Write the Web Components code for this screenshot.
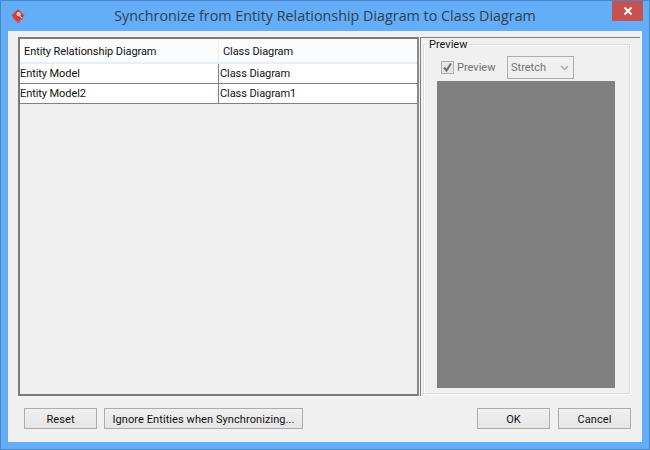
<!DOCTYPE html>
<html lang="en">
<head>
<meta charset="UTF-8">
<title>Synchronize</title>
<style>
html, body { margin: 0; padding: 0; background: #63adf9; }
body { width: 650px; height: 450px; overflow: hidden; font: 11px Roboto, sans-serif; }
</style>
</head>
<body>
<sync-dialog title-text="Synchronize from Entity Relationship Diagram to Class Diagram">
    <diagram-table slot="main">
        <table-row kind="head" a="Entity Relationship Diagram" b="Class Diagram"></table-row>
        <table-row a="Entity Model" b="Class Diagram"></table-row>
        <table-row a="Entity Model2" b="Class Diagram1"></table-row>
    </diagram-table>
    <preview-panel slot="side"></preview-panel>
    <win-button slot="left" style="width:73px">Reset</win-button>
    <win-button slot="left" style="width:199px">Ignore Entities when Synchronizing...</win-button>
    <win-button slot="right" style="width:73px">OK</win-button>
    <win-button slot="right" style="width:73px">Cancel</win-button>
</sync-dialog>

<script>
class SyncDialog extends HTMLElement {
    constructor() {
        super();
        this.attachShadow({ mode: 'open' });
        this.shadowRoot.innerHTML = `
        <style>
            :host { display: flex; flex-direction: column; box-sizing: border-box; width: 650px; height: 450px;
                background: #63adf9; border: 1px solid #4a86c4; padding: 0 7px 7px; }
            .title { display: flex; align-items: center; height: 30px; position: relative; flex: none; }
            .title svg.logo { margin-left: 2px; flex: none; }
            .title span { flex: 1; text-align: center; font: 14.33px "Open Sans", sans-serif; color: #2f3f50; padding-right: 19px; margin-top: -2px; white-space: nowrap; }
            .close { position: absolute; top: 0; right: -1px; width: 31px; height: 20px; background: #c75050; display: flex; align-items: center; justify-content: center; }
            .body { flex: 1; min-height: 0; display: flex; flex-direction: column; background: #f0f0f0; padding: 6px 2px 13px 10px; }
            .split { flex: 1; min-height: 0; display: flex; gap: 1px; margin-bottom: 12px; }
            .buttons { display: flex; justify-content: space-between; padding: 0 9px 0 6px; flex: none; }
            .group { display: flex; gap: 7px; }
            .group.r { gap: 8px; }
        </style>
        <div class="title">
            <svg class="logo" width="17" height="17" viewBox="0 0 17 17">
                <path d="M8 1 L14.5 7.5 L8 14 L1.5 7.5 Z" fill="#c9403f"/>
                <path d="M2.5 10 L8 15.5 L13.5 10 L12.5 9.5 L8 14 L3.5 9.5 Z" fill="#d4524e"/>
                <circle cx="8.6" cy="6.2" r="2.1" fill="#f0c4c8"/>
                <path d="M9 7.5 L12 10" stroke="#f0c4c8" stroke-width="1"/>
            </svg>
            <span>${this.getAttribute('title-text')}</span>
            <div class="close">
                <svg width="10" height="10" viewBox="0 0 10 10"><path d="M1.5 1.5 L8.5 8.5 M8.5 1.5 L1.5 8.5" stroke="#fff" stroke-width="2"/></svg>
            </div>
        </div>
        <div class="body">
            <div class="split">
                <slot name="main"></slot>
                <slot name="side"></slot>
            </div>
            <div class="buttons">
                <div class="group"><slot name="left"></slot></div>
                <div class="group r"><slot name="right"></slot></div>
            </div>
        </div>`;
    }
}

class DiagramTable extends HTMLElement {
    constructor() {
        super();
        this.attachShadow({ mode: 'open' });
        this.shadowRoot.innerHTML = `
        <style>
            :host { display: block; flex: none; box-sizing: border-box; width: 401px; height: 100%; background: #f0f0f0;
                border: 2px solid #7a7a7a; border-right-color: #8a8a8a; }
        </style>
        <slot></slot>`;
    }
}

class TableRow extends HTMLElement {
    constructor() {
        super();
        this.attachShadow({ mode: 'open' });
        this.shadowRoot.innerHTML = `
        <style>
            :host { display: grid; grid-template-columns: 198px 199px; height: 19px; background: #fff; color: #111;
                border-bottom: 1px solid #808080; font: 11px Roboto, sans-serif; letter-spacing: -0.08px; }
            :host([kind=head]) { height: 23px; border-bottom: 2px solid #e8eef8; background: #fbfcfe; }
            div { display: flex; align-items: center; white-space: nowrap; overflow: hidden; padding-bottom: 1px; }
            div + div { border-left: 1px solid #808080; padding-left: 1px; }
            :host([kind=head]) div { padding: 1px 0 0 4px; }
            :host([kind=head]) div + div { border-left: 1px solid #eef1f7; padding-left: 4px; }
        </style>
        <div>${this.getAttribute('a')}</div><div>${this.getAttribute('b')}</div>`;
    }
}

class PreviewPanel extends HTMLElement {
    constructor() {
        super();
        this.attachShadow({ mode: 'open' });
        this.shadowRoot.innerHTML = `
        <style>
            :host { display: block; flex: none; box-sizing: border-box; width: 220px; height: 100%; padding: 1px 10px 2px 2px;
                border-top: 1px solid #808080; border-left: 1px solid #808080; font: 11px Roboto, sans-serif; }
            fieldset { box-sizing: border-box; height: 100%; margin: 0; padding: 6px 14px 5px 13px; border: 1px solid #dcdcdc;
                box-shadow: 1px 1px 0 #fff, inset 1px 1px 0 #fff; display: flex; flex-direction: column; min-width: 0; }
            legend { padding: 0 2px; margin-left: -10px; color: #111; line-height: 11px; }
            .opts { display: flex; align-items: center; height: 23px; margin-left: 4px; gap: 3px; flex: none; margin-bottom: 2px; color: #707070; }
            .check { box-sizing: border-box; width: 13px; height: 13px; border: 1px solid #adadad; background: #e6e6e6; display: flex; }
            .label { width: 47px; }
            .sel { box-sizing: border-box; width: 67px; height: 23px; border: 1px solid #adadad; display: flex; align-items: center; justify-content: space-between; padding: 0 4px 0 3px; }
            .canvas { flex: 1; background: #808080; }
        </style>
        <fieldset>
            <legend>Preview</legend>
            <div class="opts">
                <span class="check"><svg width="11" height="11" viewBox="0 0 11 11"><path d="M2 5.5 L4.5 8.5 L9 1.5" fill="none" stroke="#6f6f6f" stroke-width="2"/></svg></span>
                <span class="label">Preview</span>
                <div class="sel"><span>Stretch</span><svg width="9" height="6" viewBox="0 0 9 6"><path d="M1 1 L4.5 4.5 L8 1" fill="none" stroke="#adadad" stroke-width="1.5"/></svg></div>
            </div>
            <div class="canvas"></div>
        </fieldset>`;
    }
}

class WinButton extends HTMLElement {
    constructor() {
        super();
        this.attachShadow({ mode: 'open' });
        this.shadowRoot.innerHTML = `
        <style>
            :host { display: flex; box-sizing: border-box; height: 21px; padding-top: 1px; align-items: center; justify-content: center;
                border: 1px solid #acacac; background: linear-gradient(#f0f0f0, #e5e5e5); color: #111; font: 11px Roboto, sans-serif; letter-spacing: 0.08px; white-space: nowrap; }
        </style>
        <slot></slot>`;
    }
}

customElements.define('sync-dialog', SyncDialog);
customElements.define('diagram-table', DiagramTable);
customElements.define('table-row', TableRow);
customElements.define('preview-panel', PreviewPanel);
customElements.define('win-button', WinButton);
</script>
</body>
</html>
